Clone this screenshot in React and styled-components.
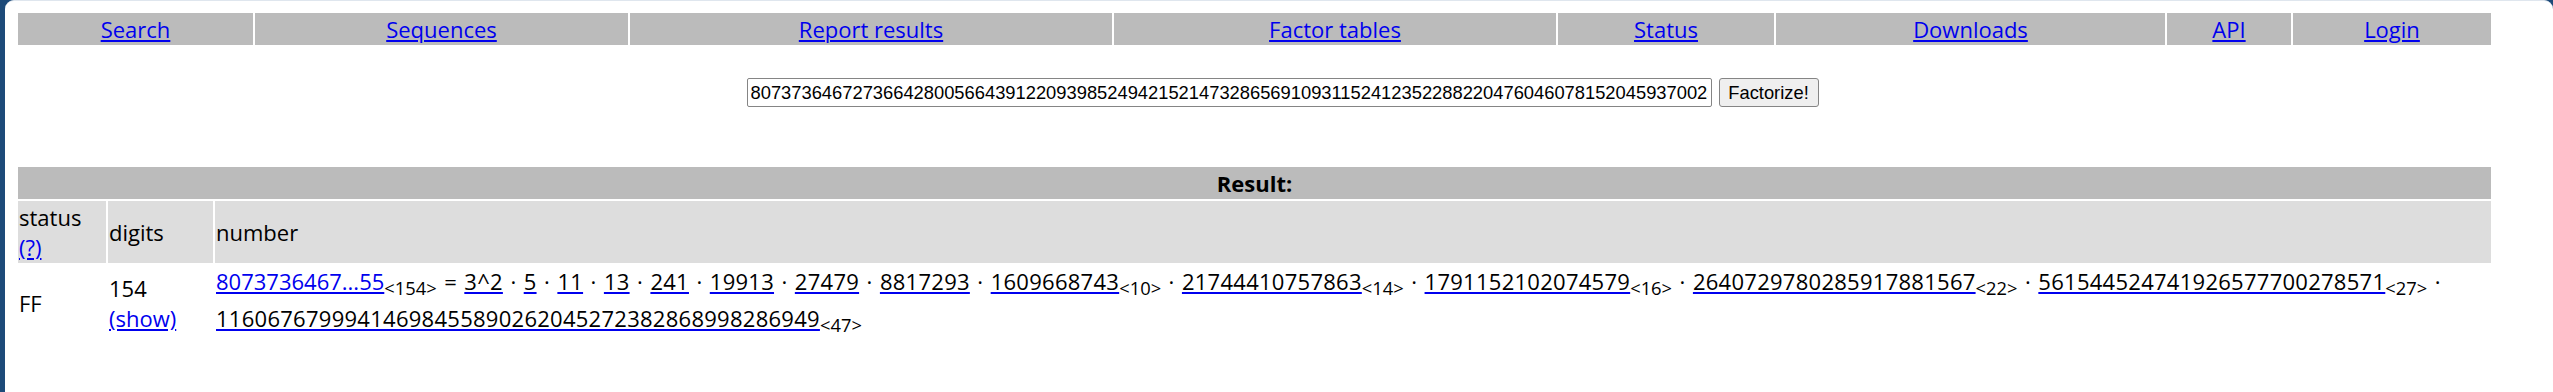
import React from "react";
import styled, { createGlobalStyle } from "styled-components";

const GlobalStyle = createGlobalStyle`
  html, body {
    margin: 0;
    padding: 0;
    background: #1d4a79;
  }
  body {
    font-family: "Open Sans", "Noto Sans", sans-serif;
    font-size: 22px;
    line-height: 30px;
    color: #000;
  }
`;

const Frame = styled.div`
  margin-left: 5px;
  min-height: 391px;
  background: #fff;
  border-top: 1px solid #dfe6ee;
  border-radius: 9px 9px 0 0;
  padding: 10px 11px 0;
`;

const Menu = styled.nav`
  display: grid;
  grid-template-columns: ${(props) => props.$cols};
  gap: 2px;
  padding: 2px;
  width: 2477px;
  box-sizing: border-box;
`;

const MenuCell = styled.div`
  background: #bbbbbb;
  text-align: center;
  padding: 1px;
`;

const Link = styled.a`
  color: #0000ee;
  text-decoration: underline;
  text-decoration-thickness: 2px;
  text-underline-offset: 2px;
  cursor: pointer;
`;

const Black = styled.span`
  color: #000;
  letter-spacing: 0.27px;
`;

const FactorForm = styled.form`
  display: flex;
  justify-content: center;
  gap: 7px;
  margin-top: 31px;
  padding-left: 7px;
`;

const NumberInput = styled.input`
  width: 965px;
  height: 29px;
  box-sizing: border-box;
  padding: 0 3px;
  border: 1px solid #858585;
  border-radius: 2px;
  font-family: "Liberation Sans", Arial, sans-serif;
  font-size: 18.33px;
  color: #000;
  background: #fff;
`;

const SubmitButton = styled.button`
  width: 100px;
  height: 29px;
  box-sizing: border-box;
  padding: 0;
  border: 1px solid #858585;
  border-radius: 3px;
  background: #efefef;
  font-family: "Liberation Sans", Arial, sans-serif;
  font-size: 18.33px;
  color: #000;
`;

const ResultTable = styled.table`
  margin-top: 58px;
  width: 2477px;
  border-spacing: 2px;
  table-layout: fixed;
`;

const Col = styled.col`
  width: ${(props) => props.$w || "auto"};
`;

const HeadCell = styled.th`
  background: ${(props) => (props.$dark ? "#bbbbbb" : "#dddddd")};
  text-align: ${(props) => (props.$center ? "center" : "left")};
  font-weight: ${(props) => (props.$bold ? 700 : 400)};
  padding: 1px;
  vertical-align: middle;
`;

const DataCell = styled.td`
  padding: 1px;
  vertical-align: middle;
`;

const Factorization = styled.td`
  padding: 1px;
  vertical-align: middle;
  word-spacing: 1.8px;
`;

const Digits = styled.sub`
  font-size: smaller;
  word-spacing: 0;
`;

const MENU = [
  ["Search", 235],
  ["Sequences", 373],
  ["Report results", 482],
  ["Factor tables", 442],
  ["Status", 216],
  ["Downloads", 389],
  ["API", 124],
  ["Login", 198],
];

const FACTORS = [
  ["3^2"],
  ["5"],
  ["11"],
  ["13"],
  ["241"],
  ["19913"],
  ["27479"],
  ["8817293"],
  ["1609668743", 10],
  ["21744410757863", 14],
  ["1791152102074579", 16],
  ["2640729780285917881567", 22],
  ["561544524741926577700278571", 27],
  ["11606767999414698455890262045272382868998286949", 47],
];

const VISIBLE =
  "8073736467273664280056643912209398524942152147328656910931152412352288220476046078152045937002";

// multiply the factors back; fall back to the visible digits if the product disagrees
const productOf = () => {
  let n = 1n;
  FACTORS.forEach(([f]) => {
    const [base, exp] = f.split("^");
    n *= BigInt(base) ** BigInt(exp || 1);
  });
  const s = n.toString();
  return s.startsWith(VISIBLE) ? s : VISIBLE + "4196052651290174432118460853270693714519081648285509263255";
};

function App() {
  const number = productOf();

  return (
    <>
      <GlobalStyle />
      <Frame>
        <Menu $cols={MENU.map(([, w]) => `${w}px`).join(" ")}>
          {MENU.map(([label]) => (
            <MenuCell key={label}>
              <Link href="#">{label}</Link>
            </MenuCell>
          ))}
        </Menu>

        <FactorForm onSubmit={(e) => e.preventDefault()}>
          <NumberInput type="text" defaultValue={number} />
          <SubmitButton type="submit">Factorize!</SubmitButton>
        </FactorForm>

        <ResultTable>
          <colgroup>
            <Col $w="88px" />
            <Col $w="105px" />
            <Col />
          </colgroup>
          <tbody>
            <tr>
              <HeadCell colSpan={3} $dark $center $bold>
                Result:
              </HeadCell>
            </tr>
            <tr>
              <HeadCell>
                status
                <br />
                <Link href="#">(?)</Link>
              </HeadCell>
              <HeadCell>digits</HeadCell>
              <HeadCell>number</HeadCell>
            </tr>
            <tr>
              <DataCell>FF</DataCell>
              <DataCell>
                154
                <br />
                <Link href="#">(show)</Link>
              </DataCell>
              <Factorization>
                <Link href="#">8073736467...55</Link>
                <Digits>&lt;154&gt;</Digits> ={" "}
                {FACTORS.map(([f, len], i) => (
                  <React.Fragment key={f}>
                    <Link href="#">
                      <Black>{f}</Black>
                    </Link>
                    {len && <Digits>&lt;{len}&gt;</Digits>}
                    {i < FACTORS.length - 1 ? " · " : ""}
                  </React.Fragment>
                ))}
              </Factorization>
            </tr>
          </tbody>
        </ResultTable>
      </Frame>
    </>
  );
}

export default App;
